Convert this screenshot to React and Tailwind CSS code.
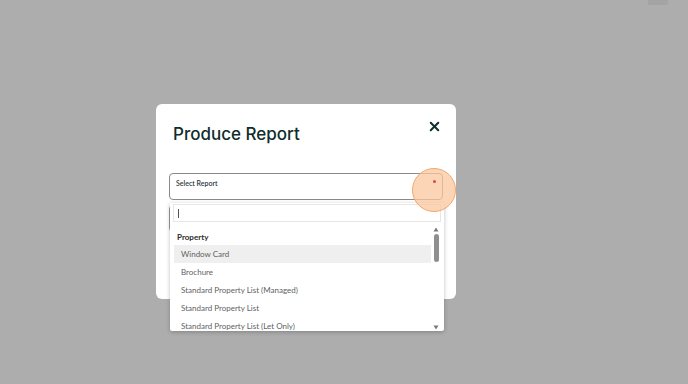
import { X } from "lucide-react";

const items = [
  "Window Card",
  "Brochure",
  "Standard Property List (Managed)",
  "Standard Property List",
  "Standard Property List (Let Only)",
];

export default function App() {
  return (
    <div
      className="relative w-[688px] h-[384px] overflow-hidden bg-[#adadad]"
      style={{ fontFamily: "Lato, 'Noto Sans', sans-serif" }}
    >
      <div className="absolute right-[20px] top-0 w-[20px] h-[5px] bg-[#a4a4a4]" />
      <div className="pt-[104px] pl-[156px]">
        <div className="w-[300px] h-[195px] bg-white rounded-[6px] relative">
          <div className="flex items-start justify-between pl-[17px] pr-[14px] pt-[17px]">
            <h2
              className="text-[17px] leading-[26px] font-medium text-[#0f2d2d]"
              style={{ fontFamily: "Inter, sans-serif" }}
            >
              Produce Report
            </h2>
            <X className="w-[15px] h-[15px] mt-[-2px] text-[#0f2d2d]" strokeWidth={3.2} />
          </div>
          <div className="px-[13px] mt-[26px] flex flex-col gap-[5px]">
            <div className="h-[27px] border border-[#8a8a8a] rounded-[4px] relative px-[6px] pt-[4px]">
              <span className="text-[7px] text-[#2a3a3a] font-semibold block leading-[10px]">
                Select Report
              </span>
            </div>
            <div className="h-[27px] border border-[#9a9a9a] rounded-[4px]" />
          </div>
          <div className="absolute right-[12px] top-[168px] w-[2px] h-[10px] bg-[#eee7a8]" />
        </div>
      </div>

      <div className="absolute left-[170px] top-[203px] w-[274px] h-[128px] bg-white shadow-[0_1px_4px_rgba(0,0,0,0.25)] rounded-b-[2px] overflow-hidden">
        <div className="mx-[3px] mt-[1px] h-[18px] border border-[#e6e6e6] flex items-center px-[4px]">
          <span className="w-px h-[9px] bg-[#555]" />
        </div>
        <div className="flex">
          <div className="flex-1 pl-[4px] pr-[2px]">
            <div className="h-[23px] pl-[3px] flex items-end text-[8px] font-bold text-[#2a2a2a] pb-[2px]">
              Property
            </div>
            {items.map((item, i) => (
              <div
                key={item}
                className={`h-[18px] flex items-center pl-[7px] text-[8px] text-[#5f5f5f] ${i === 0 ? "bg-[#efefef]" : ""}`}
              >
                {item}
              </div>
            ))}
          </div>
          <div className="w-[6px] mr-[5px] mt-[4px] flex flex-col items-center">
            <svg width="6" height="5" viewBox="0 0 6 5" className="mt-[1px]">
              <path d="M3 0.5 L5.5 4.5 H0.5 Z" fill="#7a7a7a" />
            </svg>
            <div className="w-[5px] h-[28px] bg-[#8f8f8f] rounded-full mt-[2px]" />
            <div className="flex-1" />
            <svg width="6" height="5" viewBox="0 0 6 5" className="mb-[5px]">
              <path d="M0.5 0.5 H5.5 L3 4.5 Z" fill="#7a7a7a" />
            </svg>
          </div>
        </div>
      </div>

      <div className="absolute left-[412px] top-[168px] w-[44px] h-[44px] rounded-full bg-[#fbc79d]/75 border border-[#f3a86c]" />
      <span className="absolute left-[433px] top-[180px] w-[3px] h-[3px] rounded-full bg-[#d94a4a]" />
    </div>
  );
}
